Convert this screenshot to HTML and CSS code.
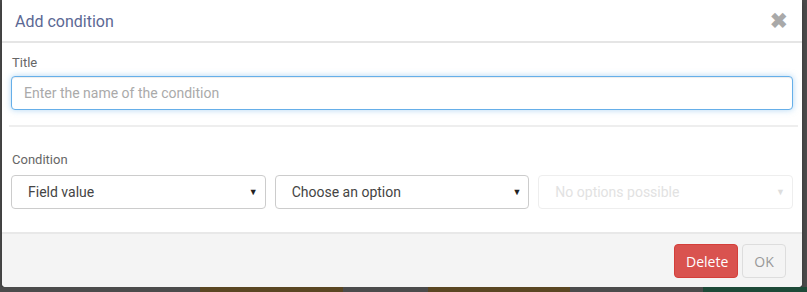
FILE: index.html
```html
<!DOCTYPE html>
<html lang="en">
<head>
    <meta charset="UTF-8">
    <title>Add condition</title>
    <link rel="stylesheet" href="styles.css">
</head>
<body>
    <div class="modal">
        <div class="modal-header">
            <h4 class="modal-title">Add condition</h4>
            <span class="close">&#10006;</span>
        </div>

        <div class="modal-body">
            <label class="field-label title-label">Title</label>
            <input type="text" class="form-control focused" placeholder="Enter the name of the condition">

            <hr class="divider">

            <label class="field-label">Condition</label>
            <div class="select-row">
                <div class="select">Field value<span class="caret">&#9660;</span></div>
                <div class="select">Choose an option<span class="caret">&#9660;</span></div>
                <div class="select disabled">No options possible<span class="caret">&#9660;</span></div>
            </div>
        </div>

        <div class="modal-footer">
            <button class="btn btn-danger">Delete</button>
            <button class="btn btn-default">OK</button>
        </div>
    </div>

    <div class="backdrop-strip">
        <div class="strip dark" style="width: 200px"></div>
        <div class="strip brown" style="width: 143px"></div>
        <div class="strip dark" style="width: 85px"></div>
        <div class="strip brown" style="width: 142px"></div>
        <div class="strip dark" style="width: 133px"></div>
        <div class="strip green" style="flex: 1"></div>
    </div>
</body>
</html>
```

FILE: styles.css
```css
* {
    box-sizing: border-box;
}

body {
    margin: 0;
    background-color: #4b4b4b;
    font-family: Roboto, "Liberation Sans", sans-serif;
    color: #333;
    width: 807px;
    height: 292px;
    overflow: hidden;
}

.modal {
    margin: 0 5px 0 2px;
    height: 287px;
    background-color: #fff;
    border-radius: 0 0 4px 4px;
    box-shadow: 0 2px 4px rgba(0,0,0,0.3);
    display: flex;
    flex-direction: column;
    overflow: hidden;
}

.modal-header {
    height: 43px;
    border-bottom: 2px solid #e5e5e5;
    display: flex;
    align-items: center;
    justify-content: space-between;
    padding: 0 14px 0 13px;
}

.modal-title {
    margin: 0;
    font-size: 16px;
    font-weight: 400;
    color: #5b6894;
    padding-top: 1px;
}

.close {
    font-size: 21px;
    font-weight: bold;
    color: #a9a9a9;
    line-height: 1;
    margin-top: 1px;
}

.modal-body {
    flex: 1;
    padding: 10px 9px 0 9px;
}

.field-label {
    display: block;
    font-size: 13px;
    color: #666;
    margin: 0 0 7px 1px;
    line-height: 16px;
}

.title-label {
    margin-top: 2px;
    margin-bottom: 5px;
}

.form-control {
    display: block;
    width: 782px;
    height: 34px;
    padding: 6px 12px;
    font-family: Roboto, "Liberation Sans", sans-serif;
    font-size: 14px;
    color: #333;
    border: 1px solid #ccc;
    border-radius: 4px;
}

.form-control::placeholder {
    color: #aaa;
}

.focused {
    border-color: #66afe9;
    outline: none;
    box-shadow: inset 0 1px 1px rgba(0,0,0,0.075), 0 0 6px rgba(102,175,233,0.5);
}

.divider {
    border: 0;
    border-top: 2px solid #eee;
    margin: 15px 0 25px -2px;
    width: 789px;
}

.select-row {
    display: flex;
    gap: 9px;
}

.select {
    flex: 1;
    height: 34px;
    border: 1px solid #ccc;
    border-radius: 4px;
    display: flex;
    align-items: center;
    justify-content: space-between;
    padding: 0 7px 0 16px;
    font-size: 14px;
    color: #444;
}

.caret {
    font-size: 9px;
    color: #222;
}

.select.disabled {
    border-color: #eee;
    color: #e2e2e2;
}

.select.disabled .caret {
    color: #ddd;
}

.modal-footer {
    height: 55px;
    background-color: #f4f4f4;
    border-top: 2px solid #e8e8e8;
    display: flex;
    justify-content: flex-end;
    align-items: center;
    gap: 4px;
    padding: 0 16px 0 0;
}

.btn {
    height: 34px;
    padding: 0 11px;
    font-family: "Open Sans", "Liberation Sans", sans-serif;
    font-size: 14px;
    border-radius: 4px;
    border: 1px solid transparent;
    margin-top: 1px;
}

.btn-danger {
    background-color: #d9534f;
    border-color: #d43f3a;
    color: #fff;
    width: 64px;
}

.btn-default {
    background-color: #f4f4f4;
    border-color: #ddd;
    color: #999;
    width: 44px;
}

.backdrop-strip {
    display: flex;
    height: 5px;
}

.strip.dark {
    background-color: #4b4b4b;
}

.strip.brown {
    background-color: #5a4622;
}

.strip.green {
    background-color: #1d4a38;
}
```
